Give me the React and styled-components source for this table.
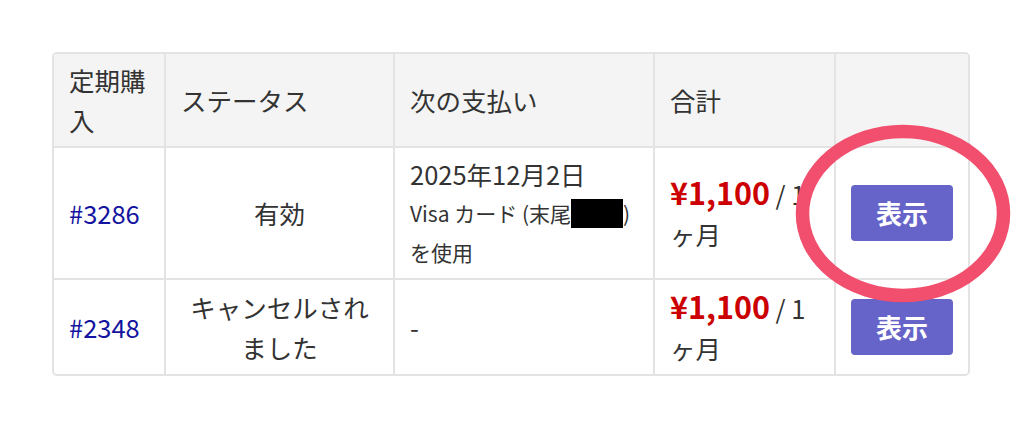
import React from "react";
import styled, { createGlobalStyle } from "styled-components";

const GlobalStyle = createGlobalStyle`
  *, *::before, *::after { box-sizing: border-box; }
  body {
    margin: 0;
    background: #fff;
    font-family: "Noto Sans CJK JP", "Noto Sans", sans-serif;
    color: #333;
  }
`;

const rows = [
  {
    id: "#3286",
    status: "有効",
    payment: { date: "2025年12月2日", card: "Visa カード (末尾", tail: ")", note: "を使用" },
  },
  { id: "#2348", status: "キャンセルされました", payment: null },
];

function App() {
  return (
    <Page>
      <GlobalStyle />
      <Table>
        <thead>
          <tr>
            <Th $w={110}>定期購入</Th>
            <Th $w={229}>ステータス</Th>
            <Th $w={260}>次の支払い</Th>
            <Th $w={181}>合計</Th>
            <Th $w={134}></Th>
          </tr>
        </thead>
        <tbody>
          {rows.map((r) => (
            <tr key={r.id}>
              <Td>
                <OrderLink href="#">{r.id}</OrderLink>
              </Td>
              <Td $center>{r.status}</Td>
              <Td>
                {r.payment ? (
                  <>
                    <div>{r.payment.date}</div>
                    <Small>
                      {r.payment.card}
                      <Redact />
                      {r.payment.tail}
                    </Small>
                    <Small>{r.payment.note}</Small>
                  </>
                ) : (
                  "-"
                )}
              </Td>
              <Td>
                <Price>¥1,100</Price> / 1<wbr />ヶ月
              </Td>
              <Td>
                <ViewButton>表示</ViewButton>
              </Td>
            </tr>
          ))}
        </tbody>
      </Table>
      <Ring width="230" height="190" viewBox="0 0 230 190">
        <ellipse cx="113" cy="95.5" rx="100.5" ry="82" fill="none" stroke="#f24e6d" strokeWidth="13.5" />
      </Ring>
    </Page>
  );
}

const Page = styled.div`
  position: relative;
  padding: 52px 0 0 52px;
  height: 427px;
`;

const Table = styled.table`
  width: 918px;
  table-layout: fixed;
  border-collapse: separate;
  border-spacing: 0;
  border: 2px solid #e3e3e3;
  border-radius: 5px;
  font-size: 25.5px;
  line-height: 40px;
  & th + th,
  & td + td {
    border-left: 2px solid #e3e3e3;
  }
  & tbody td {
    border-top: 2px solid #e3e3e3;
  }
`;

const Th = styled.th`
  width: ${(p) => p.$w}px;
  background: #f4f4f4;
  font-weight: 400;
  text-align: left;
  padding: 6px 15px;
  vertical-align: middle;
  &:first-child { border-top-left-radius: 4px; }
  &:last-child { border-top-right-radius: 4px; }
`;

const Td = styled.td`
  padding: 6px 15px;
  vertical-align: middle;
  text-align: ${(p) => (p.$center ? "center" : "left")};
`;

const OrderLink = styled.a`
  color: #1414a0;
  text-decoration: none;
`;

const Small = styled.div`
  font-size: 21px;
  line-height: 39px;
`;

const Redact = styled.span`
  display: inline-block;
  width: 52px;
  height: 29px;
  background: #000;
  vertical-align: -6px;
`;

const Price = styled.span`
  color: #cc0000;
  font-weight: 700;
  font-size: 30.5px;
`;

const ViewButton = styled.button`
  display: block;
  width: 100%;
  padding: 8px 0;
  border: none;
  border-radius: 4px;
  background: #6664c8;
  color: #fff;
  font-family: inherit;
  font-size: 26px;
  font-weight: 700;
  line-height: 40px;
  cursor: pointer;
`;

const Ring = styled.svg`
  position: absolute;
  left: 790px;
  top: 118px;
  pointer-events: none;
`;

export default App;
